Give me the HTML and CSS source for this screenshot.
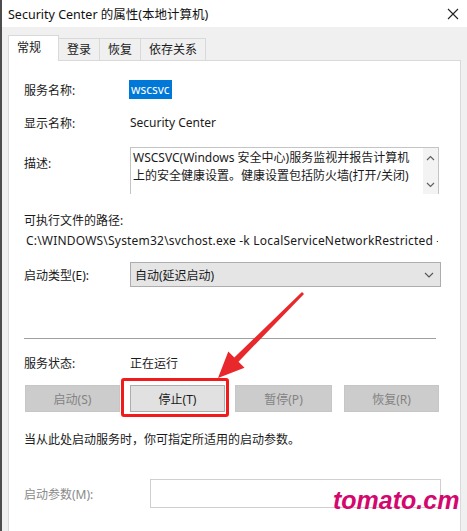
FILE: index.html
```html
<!DOCTYPE html>
<html lang="zh-CN">
<head>
<meta charset="UTF-8" />
<title>Security Center 的属性(本地计算机)</title>
<link rel="stylesheet" href="styles.css">
</head>
<body>

<div class="window">
  <!-- Barra de título -->
  <div class="titlebar">
    <span class="title">Security Center 的属性(本地计算机)</span>
    <svg class="close" width="12" height="12" viewBox="0 0 12 12"><path d="M1 1L11 11M11 1L1 11" stroke="#222" stroke-width="1.1"/></svg>
  </div>

  <div class="body">
    <!-- Pestañas -->
    <div class="tabs">
      <div class="tab active">常规</div>
      <div class="tab">登录</div>
      <div class="tab">恢复</div>
      <div class="tab">依存关系</div>
    </div>

    <div class="panel">
      <div class="row r-name">
        <span class="label">服务名称:</span>
        <span class="selected">wscsvc</span>
      </div>

      <div class="row r-display">
        <span class="label">显示名称:</span>
        <span>Security Center</span>
      </div>

      <div class="row r-desc">
        <span class="label label-desc">描述:</span>
        <div class="textbox">
          <div class="textbox-text">WSCSVC(Windows 安全中心)服务监视并报告计算机上的安全健康设置。健康设置包括防火墙(打开/关闭)</div>
          <div class="scroll">
            <svg width="9" height="6" viewBox="0 0 9 6"><path d="M1 5L4.5 1.5L8 5" fill="none" stroke="#606060" stroke-width="1.2"/></svg>
            <svg width="9" height="6" viewBox="0 0 9 6"><path d="M1 1L4.5 4.5L8 1" fill="none" stroke="#606060" stroke-width="1.2"/></svg>
          </div>
        </div>
      </div>

      <div class="row r-pathlabel">可执行文件的路径:</div>
      <div class="row r-path"><span class="path-text">C:\WINDOWS\System32\svchost.exe -k LocalServiceNetworkRestricted -p</span></div>

      <div class="row r-type">
        <span class="label">启动类型(E):</span>
        <div class="combo">
          <span>自动(延迟启动)</span>
          <svg width="10" height="6" viewBox="0 0 10 6"><path d="M1 1L5 5L9 1" fill="none" stroke="#555" stroke-width="1.1"/></svg>
        </div>
      </div>

      <div class="separator"></div>

      <div class="row r-status">
        <span class="label">服务状态:</span>
        <span>正在运行</span>
      </div>

      <div class="buttons">
        <button class="btn" disabled>启动(S)</button>
        <button class="btn btn-on">停止(T)</button>
        <button class="btn btn-wide" disabled>暂停(P)</button>
        <button class="btn btn-last" disabled>恢复(R)</button>
      </div>

      <div class="row r-hint">当从此处启动服务时，你可指定所适用的启动参数。</div>

      <div class="row r-params">
        <span class="label label-params">启动参数(M):</span>
        <div class="input"></div>
      </div>
    </div>
  </div>

  <!-- Anotaciones -->
  <div class="highlight"></div>
  <svg class="arrow" width="467" height="531" viewBox="0 0 467 531">
    <polygon points="302,292 234.3,357.5 228.3,351.5 218,378 244.5,367.7 238.5,361.7 304,294" fill="#e8282b"/>
  </svg>
  <div class="watermark">tomato.cm</div>
</div>

</body>
</html>
```

FILE: styles.css
```css
body {
  margin: 0;
  font-family: "Noto Sans", "Noto Sans CJK SC", sans-serif;
  font-size: 12px;
  color: #1a1a1a;
}

.window {
  position: relative;
  width: 465px;
  height: 531px;
  overflow: hidden;
  border-left: 2px solid #4d4d4d;
  background-color: #f0f0f0;
}

.titlebar {
  height: 27px;
  background-color: #fff;
  display: flex;
  align-items: center;
  justify-content: space-between;
  padding: 0 8px 0 6px;
}

.title {
  font-size: 12.5px;
  color: #111;
}

.body {
  padding: 8px 6px 0 6px;
}

.tabs {
  display: flex;
  height: 25px;
  align-items: flex-end;
}

.tab {
  height: 22px;
  line-height: 22px;
  padding: 0 8px;
  background-color: #f0f0f0;
  border: 1px solid #d9d9d9;
  border-bottom: none;
  margin-left: -1px;
  box-sizing: border-box;
}

.tab.active {
  height: 26px;
  line-height: 24px;
  width: 51px;
  background-color: #fff;
  margin-left: 0;
  margin-bottom: -1px;
  position: relative;
  z-index: 1;
}

.panel {
  background: #fff;
  border: 1px solid #d9d9d9;
  height: 480px;
  padding: 20px 0 0 15px;
  box-sizing: border-box;
}

.row {
  display: flex;
  align-items: center;
  height: 17px;
}

.label {
  width: 106px;
  flex-shrink: 0;
}

.selected {
  background-color: #0078d7;
  color: #fff;
  padding: 1px 2px;
  margin-left: -1px;
}

.r-display { margin-top: 16px; }

.r-desc {
  margin-top: 16px;
  height: 47px;
  align-items: flex-start;
}

.label-desc { padding-top: 7px; }

.textbox {
  width: 309px;
  height: 47px;
  border: 1px solid #c4c4c4;
  border-bottom: none;
  box-sizing: border-box;
  display: flex;
}

.textbox-text {
  flex: 1;
  padding: 1px 2px;
  line-height: 18px;
}

.scroll {
  width: 15px;
  display: flex;
  flex-direction: column;
  justify-content: space-between;
  align-items: center;
  padding: 7px 0 6px 0;
  background-color: #f3f3f3;
}

.r-pathlabel { margin-top: 17px; }

.r-path {
  margin-top: 4px;
  padding-left: 2px;
  width: 412px;
  overflow: hidden;
}

.path-text {
  white-space: nowrap;
  letter-spacing: 0.2px;
}

.r-type {
  margin-top: 13px;
  height: 25px;
}

.combo {
  width: 311px;
  height: 25px;
  box-sizing: border-box;
  background-color: #e5e5e5;
  border: 1px solid #adadad;
  display: flex;
  align-items: center;
  justify-content: space-between;
  padding: 0 6px 0 4px;
}

.separator {
  margin-top: 51px;
  width: 412px;
  border-top: 1px solid #a0a0a0;
}

.r-status { margin-top: 15px; }

.buttons {
  display: flex;
  margin-top: 14px;
  gap: 10px;
  padding-left: 1px;
}

.btn {
  width: 95px;
  height: 27px;
  border: 1px solid #c6c6c6;
  background-color: #cccccc;
  color: #838383;
  font-family: inherit;
  font-size: 12px;
  padding: 0;
}

.btn-on {
  background-color: #e1e1e1;
  border-color: #adadad;
  color: #1a1a1a;
}

.btn-wide { width: 97px; }

.btn-last { margin-left: 2px; }

.r-hint { margin-top: 18px; }

.r-params {
  margin-top: 32px;
  height: 29px;
}

.label-params {
  width: 126px;
  color: #8a8a8a;
}

.input {
  width: 291px;
  height: 29px;
  box-sizing: border-box;
  border: 1px solid #cfcfcf;
}

/* Anotaciones sobre la captura */
.highlight {
  position: absolute;
  left: 119px;
  top: 378px;
  width: 102px;
  height: 33px;
  border: 3px solid #f21b1b;
  border-radius: 3px;
}

.arrow {
  position: absolute;
  left: -2px;
  top: 0;
}

.watermark {
  position: absolute;
  left: 331px;
  top: 486px;
  font-family: "Liberation Sans", sans-serif;
  font-weight: bold;
  font-style: italic;
  font-size: 25px;
  color: #d3086e;
}
```
